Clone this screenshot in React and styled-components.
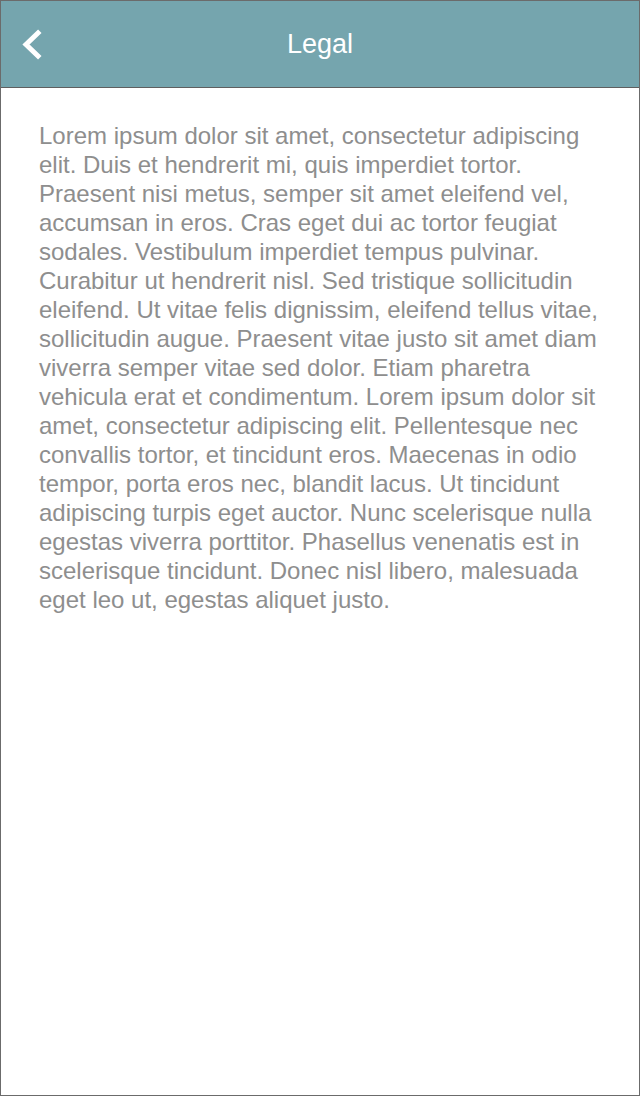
import React from 'react';
import styled, { createGlobalStyle } from 'styled-components';

const Global = createGlobalStyle`
  html, body { margin: 0; padding: 0; background: #fff; }
  * { box-sizing: border-box; }
`

const Screen = styled.div`
  width: 640px;
  height: 1096px;
  border: 1px solid #6b6b6b;
  background: #fff;
  font-family: "Liberation Sans", Arial, sans-serif;
  display: flex;
  flex-direction: column;
`

const Header = styled.div`
  height: 87px;
  flex-shrink: 0;
  background: #75a5ae;
  border-bottom: 1px solid #5f5f5f;
  display: grid;
  grid-template-columns: 80px 1fr 80px;
  align-items: center;
`

const BackButton = styled.button`
  border: none;
  background: none;
  padding: 0 0 0 19px;
  height: 100%;
  display: flex;
  align-items: center;
  cursor: pointer;
`

const Title = styled.h1`
  margin: 0;
  padding-top: 1px;
  text-align: center;
  color: #fff;
  font-size: 27px;
  font-weight: 400;
`

const Content = styled.div`
  padding: 33px 30px 0 38px;
`

const Text = styled.p`
  margin: 0;
  color: #8e8e8e;
  font-family: "Liberation Sans", Arial, sans-serif;
  font-size: 24px;
  line-height: 29px;
`

const Legal = () => {
  return (
    <Screen>
      <Global />
      <Header>
        <BackButton>
          <svg width="26" height="34" viewBox="0 0 26 34">
            <polyline points="18,6 6,17.5 18,29" fill="none" stroke="#fff" strokeWidth="5" strokeLinecap="square" />
          </svg>
        </BackButton>
        <Title>Legal</Title>
        <div />
      </Header>
      <Content>
        <Text>
          Lorem ipsum dolor sit amet, consectetur adipiscing elit. Duis et hendrerit mi, quis imperdiet tortor. Praesent nisi metus, semper sit amet eleifend vel, accumsan in eros. Cras eget dui ac tortor feugiat sodales. Vestibulum imperdiet tempus pulvinar. Curabitur ut hendrerit nisl. Sed tristique sollicitudin eleifend. Ut vitae felis dignissim, eleifend tellus vitae, sollicitudin augue. Praesent vitae justo sit amet diam viverra semper vitae sed dolor. Etiam pharetra vehicula erat et condimentum. Lorem ipsum dolor sit amet, consectetur adipiscing elit. Pellentesque nec convallis tortor, et tincidunt eros. Maecenas in odio tempor, porta eros nec, blandit lacus. Ut tincidunt adipiscing turpis eget auctor. Nunc scelerisque nulla egestas viverra porttitor. Phasellus venenatis est in scelerisque tincidunt. Donec nisl libero, malesuada eget leo ut, egestas aliquet justo.
        </Text>
      </Content>
    </Screen>
  );
}

export default Legal;
